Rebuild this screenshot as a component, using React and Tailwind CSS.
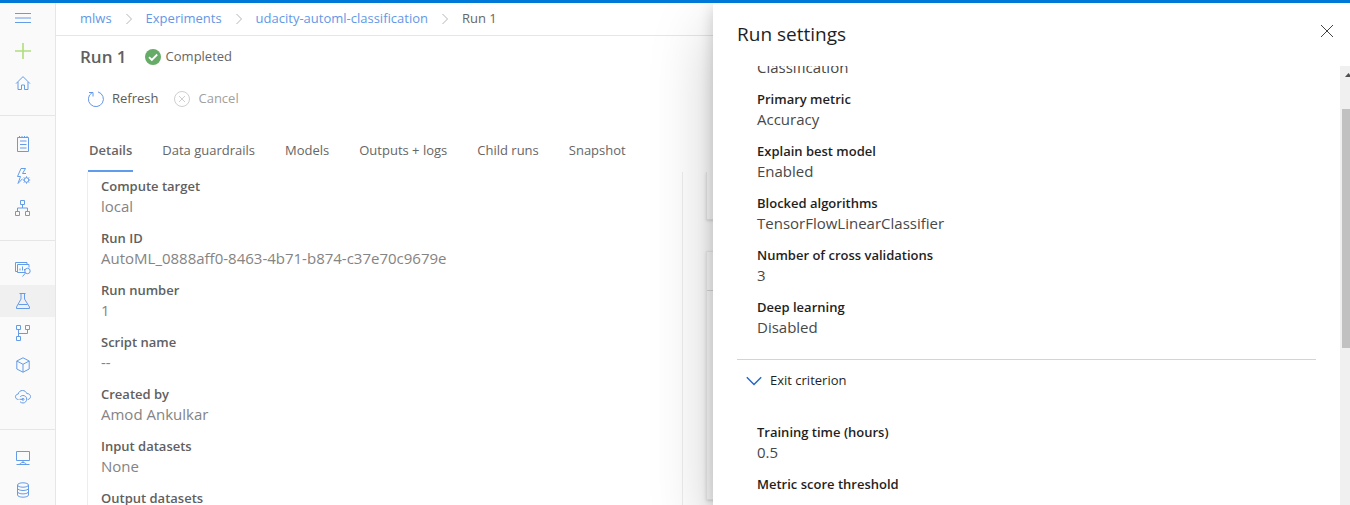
const glyphs = {
  menu: <path d="M0 2.5h16M0 7h16M0 11.5h16" />,
  plus: <path d="M8 0v16M0 8h16" strokeWidth="1.6" />,
  home: <path d="M1 8.6 8 1.6l7 7M3 7v7.5h3.5V10h3v4.500H13V7" />,
  notes: (
    <>
      <path d="M2.5 1.5h11v14h-11z" />
      <path d="M4.5 0v2M7 0v2M9.500 0v2M12 0v2M5 5h6.500M5 8.500h6.500M5 12h6.500" />
    </>
  ),
  bolt: (
    <>
      <path d="M6 .5h4.500L7.500 5.500h3.500M6 .5 2.500 8.500h3L3 15.500l4.500-4.800" />
      <circle cx="11.500" cy="12" r="2.300" />
      <path d="M11.500 8.300v1.400M11.500 14.300v1.400M7.800 12h1.400M13.800 12h1.400M8.900 9.400l1 1M13.100 13.600l1 1M14.100 9.400l-1 1M9.900 13.600l-1 1" />
    </>
  ),
  tree: (
    <path d="M5.500.5h4v4h-4zM.5 11.500h4v4h-4zM10.500 11.500h4v4h-4zM7.500 4.500V8M2.500 11.500V8h10v3.500" />
  ),
  monitorSearch: (
    <>
      <path d="M2.500 10.500h-2v-9h11.500v2" />
      <path d="M10 11.500H2.500v-8h11.500v3M5 9.500v-2M7.500 9.500v-4M9.500 9.500V8" />
      <circle cx="12.500" cy="10" r="2.700" />
      <path d="M10.500 12 7.500 15.500" />
    </>
  ),
  flask: (
    <path d="M4.500.5h6M6 .5v5.500L1.500 14v1.500h13V14L9.500 6V.5M3.500 11.500h9" />
  ),
  branch: (
    <path d="M1.500.5h4v4h-4zM10.500.5h4v4h-4zM1.500 11.500h4v4h-4zM3.500 4.500v7M12.500 4.500v4h-9" />
  ),
  cube: <path d="M8 .8 14.200 4v8L8 15.200 1.800 12V4zM1.800 4 8 7.300 14.200 4M8 7.300v7.900" />,
  cloud: (
    <>
      <path d="M3.500 10.500C1.500 10.500.5 9.200.5 7.800c0-1.500 1-2.600 2.700-2.700C3.600 2.900 5.300 1.500 7.500 1.500c2 0 3.500 1 4.200 3 2.300 0 3.800 1.300 3.800 3 0 1.600-1 2.700-2.800 3" />
      <path d="M5 8c.8-1 1.800-1.500 3-1.500 2.200 0 3.700 1.600 3.700 3.600S10.200 14 8 14c-1.200 0-2.200-.5-3-1.300" />
      <path d="M4.500 10.300H8" />
      <circle cx="8" cy="10.300" r="1" />
    </>
  ),
  desktop: (
    <path d="M1.500 1.500h13v9h-13zM8 10.500v2M1.500 14.500h3.500c0-1.200 1.200-2 3-2s3 .8 3 2h3.500M5 14.500h6" />
  ),
  database: (
    <>
      <ellipse cx="8" cy="3" rx="5.500" ry="2.200" />
      <path d="M2.500 3v10c0 1.200 2.500 2.200 5.500 2.200s5.500-1 5.500-2.200V3M2.500 6.300c0 1.200 2.500 2.200 5.500 2.200s5.500-1 5.500-2.200M2.500 9.700c0 1.200 2.500 2.200 5.500 2.200s5.500-1 5.500-2.200" />
    </>
  ),
};

function Glyph({ name }) {
  return (
    <svg viewBox="0 0 16 16" className="size-4" fill="none" stroke="currentColor" aria-hidden="true">
      {glyphs[name]}
    </svg>
  );
}

const navGroups = [
  [["notes", "Notebooks"], ["bolt", "Automated ML"], ["tree", "Designer"]],
  [
    ["monitorSearch", "Datasets"],
    ["flask", "Experiments"],
    ["branch", "Pipelines"],
    ["cube", "Models"],
    ["cloud", "Endpoints"],
  ],
  [["desktop", "Compute"], ["database", "Datastores"]],
];

function NavLink({ name, label }) {
  const active = name === "flask";
  return (
    <a
      href="#"
      aria-label={label}
      aria-current={active ? "page" : undefined}
      className={`flex h-8 items-center pl-[15px] ${active ? "bg-[#f0f0f0]" : ""}`}
    >
      <Glyph name={name} />
    </a>
  );
}

function Sidebar() {
  return (
    <nav className="w-14 shrink-0 border-r border-[#e6e6e6] bg-[#fafafa] text-[#659ce8]">
      <div className="pb-4">
        <button aria-label="Menu" className="flex h-8 w-full items-center pl-[15px]">
          <Glyph name="menu" />
        </button>
        <button aria-label="New" className="flex h-8 w-full items-center pl-[15px] text-[#aede7b]">
          <Glyph name="plus" />
        </button>
        <NavLink name="home" label="Home" />
      </div>
      {navGroups.map((group, i) => (
        <div key={i} className="border-t border-[#e6e6e6] pt-3 pb-4">
          {group.map(([name, label]) => (
            <NavLink key={name} name={name} label={label} />
          ))}
        </div>
      ))}
    </nav>
  );
}

function Separator() {
  return (
    <svg viewBox="0 0 6 12" className="h-3 w-1.5" fill="none" stroke="#b5b5b5" aria-hidden="true">
      <path d="M.5 1l5 5-5 5" />
    </svg>
  );
}

function Breadcrumbs() {
  return (
    <nav
      aria-label="Breadcrumb"
      className="flex h-[33px] items-center gap-[14px] border-b border-[#e6e6e6] pl-6 text-[13px] text-[#6397e8]"
    >
      <a href="#">mlws</a>
      <Separator />
      <a href="#">Experiments</a>
      <Separator />
      <a href="#">udacity-automl-classification</a>
      <Separator />
      <span className="text-[#666]">Run 1</span>
    </nav>
  );
}

function Fields({ items, labelClass, valueClass }) {
  return (
    <dl className="flex flex-col gap-3">
      {items.map(([label, value]) => (
        <div key={label}>
          <dt className={`text-[13px] leading-5 font-semibold ${labelClass}`}>{label}</dt>
          <dd className={`text-[15px] leading-5 ${valueClass}`}>{value}</dd>
        </div>
      ))}
    </dl>
  );
}

const details = [
  ["Compute target", "local"],
  ["Run ID", "AutoML_0888aff0-8463-4b71-b874-c37e70c9679e"],
  ["Run number", "1"],
  ["Script name", "--"],
  ["Created by", "Amod Ankulkar"],
  ["Input datasets", "None"],
  ["Output datasets", "None"],
];

const tabs = ["Details", "Data guardrails", "Models", "Outputs + logs", "Child runs", "Snapshot"];

function RunPage() {
  return (
    <main className="flex min-w-0 flex-1 flex-col">
      <Breadcrumbs />
      <div className="flex h-[42px] items-center pl-6">
        <h1 className="text-[17px] font-semibold text-[#606060]">Run 1</h1>
        <svg viewBox="0 0 16 16" className="ml-[18px] size-4" aria-hidden="true">
          <circle cx="8" cy="8" r="8" fill="#66ab68" />
          <path d="M4 8.200l2.800 2.800L12.200 5.500" fill="none" stroke="#fff" strokeWidth="1.800" />
        </svg>
        <span className="ml-[5px] text-[13px] text-[#666]">Completed</span>
      </div>
      <div className="flex h-[42px] items-center gap-4 pl-8 text-[13px]">
        <button className="flex items-center gap-2 text-[#5c5c5c]">
          <svg viewBox="0 0 16 16" className="size-4" fill="none" stroke="#6397e8" aria-hidden="true">
            <path d="M10 .9A7.500 7.500 0 1 1 4 1.700M1 1.500h4v4" />
          </svg>
          Refresh
        </button>
        <button disabled className="flex items-center gap-2 text-[#a0a0a0]">
          <svg viewBox="0 0 16 16" className="size-4" fill="none" stroke="#cfcfcf" aria-hidden="true">
            <circle cx="8" cy="8" r="7.500" />
            <path d="M5 5l6 6M11 5l-6 6" />
          </svg>
          Cancel
        </button>
      </div>
      <div role="tablist" className="mt-2 flex h-11 gap-7 pl-8 text-[13px] text-[#666]">
        {tabs.map((tab, i) => (
          <button
            key={tab}
            role="tab"
            aria-selected={i === 0}
            className={`border-b-2 px-px pt-[3px] ${i === 0 ? "border-[#5f9cee] font-semibold" : "border-transparent"}`}
          >
            {tab}
          </button>
        ))}
      </div>
      <div className="grid min-h-0 flex-1 grid-cols-2 gap-6 overflow-hidden pr-12 pl-8">
        <section className="-ml-px border-x border-[#ededed] px-[13px] pt-1">
          <Fields items={details} labelClass="text-[#606060]" valueClass="text-[#848484]" />
        </section>
        <div className="-ml-px">
          <section className="h-12 border border-t-0 border-[#ebebeb] shadow-sm" />
          <section className="mt-[31px] h-[249px] border border-[#efefef] shadow-sm">
            <div className="h-[39px] border-b border-[#dcdcdc]" />
          </section>
        </div>
      </div>
    </main>
  );
}

const taskSettings = [
  ["Primary metric", "Accuracy"],
  ["Explain best model", "Enabled"],
  ["Blocked algorithms", "TensorFlowLinearClassifier"],
  ["Number of cross validations", "3"],
  ["Deep learning", "Disabled"],
];

const exitSettings = [
  ["Training time (hours)", "0.5"],
  ["Metric score threshold", "--"],
];

function SettingsPanel() {
  return (
    <aside
      aria-label="Run settings"
      className="absolute inset-y-0 right-0 flex w-[637px] max-w-full flex-col bg-white text-[#1f1f1f] shadow-[0_26px_58px_rgba(0,0,0,0.22),0_5px_14px_rgba(0,0,0,0.18)]"
    >
      <header className="flex h-[63px] shrink-0 items-center justify-between pr-[17px] pl-6">
        <h2 className="text-[19px]">Run settings</h2>
        <button aria-label="Close" className="pb-[7px]">
          <svg viewBox="0 0 12 12" className="size-3" fill="none" stroke="#444" aria-hidden="true">
            <path d="M0 0l12 12M12 0L0 12" />
          </svg>
        </button>
      </header>
      <div className="flex min-h-0 flex-1">
        <div className="flex-1 overflow-hidden px-6">
          <div className="-mt-[9px] px-5">
            <p className="mb-3 text-[15px] leading-5 text-[#484848]">Classification</p>
            <Fields items={taskSettings} labelClass="text-[#1f1f1f]" valueClass="text-[#484848]" />
          </div>
          <hr className="mt-[22px] border-[#d4d4d4]" />
          <button aria-expanded="true" className="flex h-[42px] items-center gap-2 pl-[9px] text-[13px]">
            <svg viewBox="0 0 16 10" className="h-2.5 w-4" fill="none" stroke="#2264d1" strokeWidth="1.400" aria-hidden="true">
              <path d="M.8 1.200L8 8.400l7.200-7.200" />
            </svg>
            Exit criterion
          </button>
          <div className="mt-5 px-5">
            <Fields items={exitSettings} labelClass="text-[#1f1f1f]" valueClass="text-[#484848]" />
          </div>
        </div>
        <div className="w-2.5 overflow-hidden bg-[#f0f0f0] pl-0.5" aria-hidden="true">
          <svg viewBox="0 0 13 43" className="h-[43px] w-[13px]" fill="#505050">
            <path d="M3 11l3.500-4 3.500 4z" />
          </svg>
          <div className="h-[239px] bg-[#c1c1c1]" />
        </div>
      </div>
    </aside>
  );
}

export default function App() {
  return (
    <div className="flex h-screen flex-col overflow-hidden bg-white font-['Open_Sans',sans-serif]">
      <div className="h-[3px] shrink-0 bg-[#0078d7]" />
      <div className="relative flex min-h-0 flex-1 overflow-hidden">
        <Sidebar />
        <RunPage />
        <SettingsPanel />
      </div>
    </div>
  );
}
